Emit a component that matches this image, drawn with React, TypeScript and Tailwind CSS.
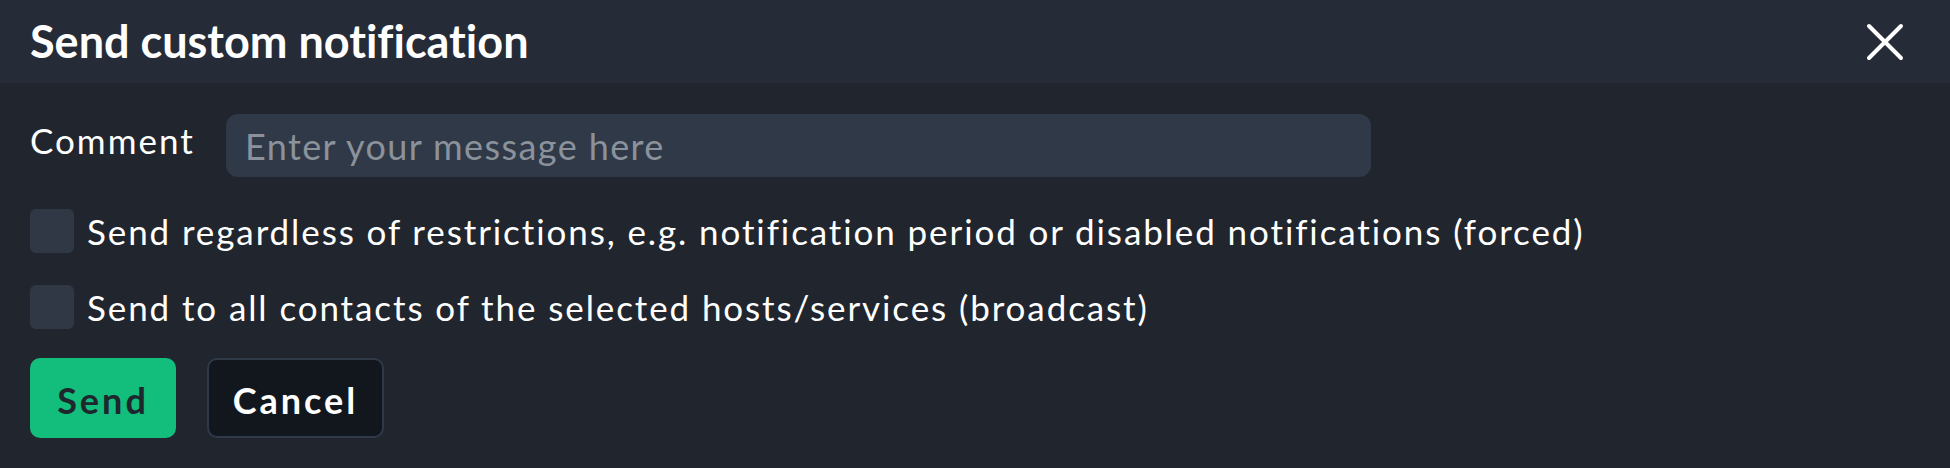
export default function App() {
  return (
    <div className="w-[1950px] h-[468px] bg-[#21262e] text-white font-['Lato',sans-serif] [font-variant-ligatures:none] overflow-hidden">
      <div className="h-[83px] bg-[#262c37] flex items-center justify-between pl-[30px] pr-[46px]">
        <h1 className="text-[45px] font-bold leading-none">Send custom notification</h1>
        <button className="w-[38px] h-[38px] flex items-center justify-center" aria-label="Close">
          <svg width="38" height="38" viewBox="0 0 38 38" fill="none" stroke="#ffffff" strokeWidth="4" strokeLinecap="round">
            <path d="M3 3 L35 35 M35 3 L3 35" />
          </svg>
        </button>
      </div>

      <div className="px-[30px] pt-[31px] flex flex-col">
        <div className="flex items-center h-[63px]">
          <label className="text-[35px] tracking-[2px] w-[196px] pb-[10px]">Comment</label>
          <input
            className="w-[1145px] h-[63px] rounded-[12px] bg-[#303947] px-[19px] text-[36px] tracking-[1.4px] text-white placeholder:text-[#8b929b] outline-none"
            placeholder="Enter your message here"
          />
        </div>

        <label className="flex items-center gap-[13px] mt-[32px] h-[44px]">
          <span className="w-[44px] h-[44px] rounded-[6px] bg-[#2f3844] shrink-0" />
          <span className="text-[35px] tracking-[1.9px]">
            Send regardless of restrictions, e.g. notification period or disabled notifications (forced)
          </span>
        </label>

        <label className="flex items-center gap-[13px] mt-[32px] h-[44px]">
          <span className="w-[44px] h-[44px] rounded-[6px] bg-[#2f3844] shrink-0" />
          <span className="text-[35px] tracking-[1.9px]">Send to all contacts of the selected hosts/services (broadcast)</span>
        </label>

        <div className="flex gap-[31px] mt-[29px]">
          <button className="w-[146px] h-[80px] rounded-[10px] bg-[#13bd7c] text-[#1e262e] text-[36px] font-bold tracking-[3px] pt-[4px]">
            Send
          </button>
          <button className="w-[177px] h-[80px] rounded-[10px] bg-[#12171e] border-2 border-[#2f3947] text-white text-[36px] font-bold tracking-[3px] pt-[4px]">
            Cancel
          </button>
        </div>
      </div>
    </div>
  );
}
